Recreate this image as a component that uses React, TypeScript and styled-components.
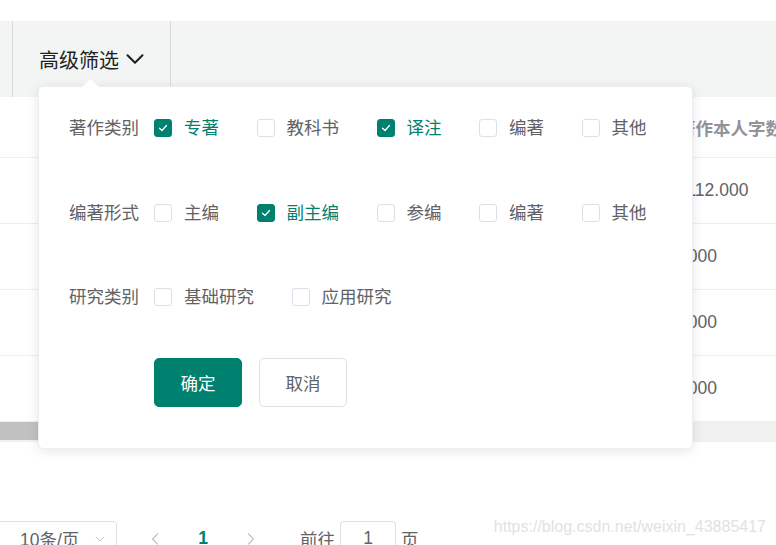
import React, { useState } from 'react';
import styled, { createGlobalStyle } from 'styled-components';
import { ChevronDown, ChevronLeft, ChevronRight } from 'lucide-react';

const TEAL = '#00806f';

const GlobalStyle = createGlobalStyle`
  html, body {
    margin: 0;
    padding: 0;
    background: #fff;
    overflow: hidden;
  }
  body {
    font-family: "Liberation Sans", "Noto Sans CJK SC", sans-serif;
    color: #606266;
  }
  * {
    box-sizing: border-box;
  }
`;

const Page = styled.div`
  position: relative;
  width: 776px;
  height: 545px;
  overflow: hidden;
  padding-top: 21px;
`;

const FilterBar = styled.div`
  display: flex;
  height: 76px;
  background-color: #f3f4f4;
`;

const FilterTab = styled.div`
  position: relative;
  display: flex;
  align-items: center;
  gap: 1px;
  margin-left: 12px;
  padding: 0 20px 0 26px;
  border-left: 1px solid #d9d9d9;
  border-right: 1px solid #d9d9d9;
  font-size: 20px;
  color: #1f1f1f;
  cursor: pointer;
`;

const Popover = styled.div`
  position: absolute;
  top: 65px;
  left: 25px;
  z-index: 10;
  width: 655px;
  height: 363px;
  padding: 21px 0 0 30px;
  background: #fff;
  border: 1px solid #ebeef5;
  border-radius: 5px;
  box-shadow: 0 2px 12px rgba(0, 0, 0, 0.1);
  cursor: default;

  &::before {
    content: '';
    position: absolute;
    top: -7px;
    left: 45px;
    width: 12px;
    height: 12px;
    background: #fff;
    border-top: 1px solid #ebeef5;
    border-left: 1px solid #ebeef5;
    transform: rotate(45deg);
  }
`;

const FilterRow = styled.div`
  display: flex;
  align-items: center;
  height: 40px;
  margin-bottom: 45px;

  &:nth-child(2) {
    margin-bottom: 44px;
  }
  &:nth-child(3) {
    margin-bottom: 41px;
  }
`;

const RowLabel = styled.div`
  width: 85px;
  flex-shrink: 0;
  font-size: 17.5px;
  line-height: 24px;
  color: #606266;
`;

const CheckItem = styled.label<{ $checked: boolean }>`
  display: flex;
  align-items: center;
  margin-right: 37.5px;
  font-size: 17.5px;
  line-height: 24px;
  color: ${(p) => (p.$checked ? TEAL : '#606266')};
  cursor: pointer;
  user-select: none;
`;

const Box = styled.span<{ $checked: boolean }>`
  display: inline-flex;
  align-items: center;
  justify-content: center;
  width: 18px;
  height: 18px;
  margin-right: 12px;
  border: 1px solid ${(p) => (p.$checked ? TEAL : '#dcdfe6')};
  border-radius: 3px;
  background: ${(p) => (p.$checked ? TEAL : '#fff')};
`;

const Actions = styled.div`
  display: flex;
  gap: 17px;
  margin-left: 85px;
`;

const ActionButton = styled.button<{ $primary?: boolean }>`
  width: 88px;
  height: 49px;
  padding: 0;
  border-radius: 5px;
  border: 1px solid ${(p) => (p.$primary ? TEAL : '#dcdfe6')};
  background: ${(p) => (p.$primary ? TEAL : '#fff')};
  color: ${(p) => (p.$primary ? '#fff' : '#606266')};
  font-family: inherit;
  font-size: 17.5px;
  cursor: pointer;
`;

const Table = styled.div`
  width: 900px;
`;

const TableRow = styled.div<{ $head?: boolean }>`
  display: grid;
  grid-template-columns: 678px 1fr;
  align-items: center;
  height: ${(p) => (p.$head ? '61px' : '66px')};
  border-bottom: 1px solid #ebeef5;
  font-size: 17.5px;
  font-weight: ${(p) => (p.$head ? 700 : 400)};
  color: ${(p) => (p.$head ? '#909399' : '#606266')};
  white-space: nowrap;
`;

const Cell = styled.div`
  overflow: hidden;
`;

const ScrollTrack = styled.div`
  height: 20px;
  background: #f0f0f0;
`;

const ScrollThumb = styled.div`
  width: 420px;
  height: 18px;
  background: #c1c1c1;
`;

const Pagination = styled.div`
  display: flex;
  align-items: center;
  margin-top: 79px;
  height: 35px;
  font-size: 17.5px;
  color: #606266;
`;

const SizeSelect = styled.div`
  display: flex;
  align-items: center;
  justify-content: space-between;
  width: 122px;
  height: 35px;
  margin-left: -5px;
  margin-right: 14px;
  padding: 0 8px 0 24px;
  border: 1px solid #dcdfe6;
  border-radius: 4px;
`;

const PagerButton = styled.div<{ $active?: boolean }>`
  display: flex;
  align-items: center;
  justify-content: center;
  width: 48px;
  height: 35px;
  font-weight: ${(p) => (p.$active ? 700 : 400)};
  color: ${(p) => (p.$active ? TEAL : '#c0c4cc')};
`;

const Jumper = styled.div`
  display: flex;
  align-items: center;
  gap: 5px;
  margin-left: 25px;
`;

const JumpInput = styled.div`
  display: flex;
  align-items: center;
  justify-content: center;
  width: 56px;
  height: 35px;
  border: 1px solid #dcdfe6;
  border-radius: 4px;
`;

const Watermark = styled.div`
  position: absolute;
  right: 10px;
  top: 516px;
  font-size: 16px;
  line-height: 22px;
  color: #e2e2e2;
`;

const CheckMark = () => (
  <svg width="12" height="12" viewBox="0 0 12 12" fill="none">
    <path d="M2.5 6.2 L5 8.5 L9.5 3.5" stroke="#fff" strokeWidth="1.3" strokeLinecap="round" strokeLinejoin="round" />
  </svg>
);

interface Group {
  label: string;
  options: string[];
}

const groups: Group[] = [
  { label: '著作类别', options: ['专著', '教科书', '译注', '编著', '其他'] },
  { label: '编著形式', options: ['主编', '副主编', '参编', '编著', '其他'] },
  { label: '研究类别', options: ['基础研究', '应用研究'] },
];

const rows = ['1112.000', '1000', '1000', '1000'];

const App: React.FC = () => {
  const [checked, setChecked] = useState<Record<string, boolean>>({
    '著作类别-专著': true,
    '著作类别-译注': true,
    '编著形式-副主编': true,
  });

  const toggle = (key: string) => {
    setChecked((prev) => ({ ...prev, [key]: !prev[key] }));
  };

  return (
    <Page>
      <GlobalStyle />
      <FilterBar>
        <FilterTab>
          高级筛选
          <ChevronDown size={30} strokeWidth={1.6} color="#1f1f1f" />
          <Popover onClick={(e) => e.stopPropagation()}>
            {groups.map((g) => (
              <FilterRow key={g.label}>
                <RowLabel>{g.label}</RowLabel>
                {g.options.map((opt) => {
                  const key = `${g.label}-${opt}`;
                  const on = !!checked[key];
                  return (
                    <CheckItem key={key} $checked={on} onClick={() => toggle(key)}>
                      <Box $checked={on}>{on && <CheckMark />}</Box>
                      {opt}
                    </CheckItem>
                  );
                })}
              </FilterRow>
            ))}
            <Actions>
              <ActionButton $primary>确定</ActionButton>
              <ActionButton>取消</ActionButton>
            </Actions>
          </Popover>
        </FilterTab>
      </FilterBar>

      <Table>
        <TableRow $head>
          <Cell />
          <Cell>著作本人字数</Cell>
        </TableRow>
        {rows.map((v, i) => (
          <TableRow key={i}>
            <Cell />
            <Cell>{v}</Cell>
          </TableRow>
        ))}
      </Table>
      <ScrollTrack>
        <ScrollThumb />
      </ScrollTrack>

      <Pagination>
        <SizeSelect>
          10条/页
          <ChevronDown size={16} strokeWidth={1.5} color="#c0c4cc" />
        </SizeSelect>
        <PagerButton>
          <ChevronLeft size={20} strokeWidth={1.5} />
        </PagerButton>
        <PagerButton $active>1</PagerButton>
        <PagerButton>
          <ChevronRight size={20} strokeWidth={1.5} />
        </PagerButton>
        <Jumper>
          前往
          <JumpInput>1</JumpInput>
          页
        </Jumper>
      </Pagination>

      <Watermark>https://blog.csdn.net/weixin_43885417</Watermark>
    </Page>
  );
};

export default App;
